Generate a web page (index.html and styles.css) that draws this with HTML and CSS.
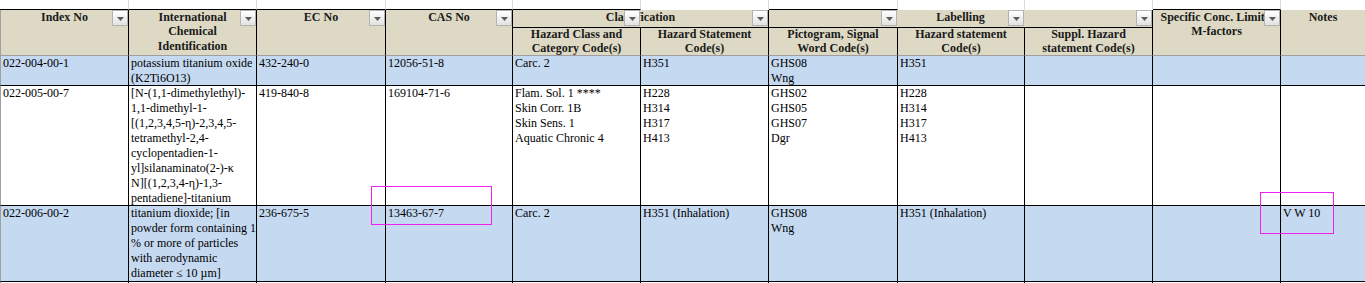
FILE: index.html
```html
<!DOCTYPE html>
<html lang="en">
<head>
<meta charset="utf-8">
<title>Annex VI – Titanium entries</title>
<link rel="stylesheet" href="styles.css">
</head>
<body>
<div class="sheet">
  <!-- spreadsheet strip above the header -->
  <div class="g k"></div><div class="g k"></div><div class="g k"></div><div class="g k"></div><div class="g k"></div>
  <div class="g"></div><div class="g k"></div><div class="g"></div><div class="g"></div><div class="g k"></div><div class="g last"></div>

  <!-- header -->
  <div class="h r2 first">Index No<span class="dd"></span></div>
  <div class="h r2">International<br>Chemical<br>Identification<span class="dd"></span></div>
  <div class="h r2">EC No<span class="dd"></span></div>
  <div class="h r2">CAS No<span class="dd"></span></div>
  <div class="h c2 grp">Classification<span class="dd at128"></span><span class="dd"></span></div>
  <div class="h c3 grp">Labelling<span class="dd at255"></span><span class="dd at128"></span><span class="dd"></span></div>
  <div class="h r2">Specific Conc. Limits,<br>M-factors<span class="dd"></span></div>
  <div class="h r2 last">Notes</div>
  <div class="h sub">Hazard Class and<br>Category Code(s)</div>
  <div class="h sub">Hazard Statement<br>Code(s)</div>
  <div class="h sub">Pictogram, Signal<br>Word Code(s)</div>
  <div class="h sub">Hazard statement<br>Code(s)</div>
  <div class="h sub">Suppl. Hazard<br>statement Code(s)</div>

  <!-- row 1 -->
  <div class="d blue first">022-004-00-1</div>
  <div class="d blue">potassium titanium oxide<br>(K2Ti6O13)</div>
  <div class="d blue">432-240-0</div>
  <div class="d blue">12056-51-8</div>
  <div class="d blue">Carc. 2</div>
  <div class="d blue">H351</div>
  <div class="d blue">GHS08<br>Wng</div>
  <div class="d blue">H351</div>
  <div class="d blue"></div>
  <div class="d blue"></div>
  <div class="d blue last"></div>

  <!-- row 2 -->
  <div class="d first">022-005-00-7</div>
  <div class="d">[N-(1,1-dimethylethyl)-<br>1,1-dimethyl-1-<br>[(1,2,3,4,5-η)-2,3,4,5-<br>tetramethyl-2,4-<br>cyclopentadien-1-<br>yl]silanaminato(2-)-κ<br>N][(1,2,3,4-η)-1,3-<br>pentadiene]-titanium</div>
  <div class="d">419-840-8</div>
  <div class="d">169104-71-6</div>
  <div class="d">Flam. Sol. 1 ****<br>Skin Corr. 1B<br>Skin Sens. 1<br>Aquatic Chronic 4</div>
  <div class="d">H228<br>H314<br>H317<br>H413</div>
  <div class="d">GHS02<br>GHS05<br>GHS07<br>Dgr</div>
  <div class="d">H228<br>H314<br>H317<br>H413</div>
  <div class="d"></div>
  <div class="d"></div>
  <div class="d last"></div>

  <!-- row 3 -->
  <div class="d blue first">022-006-00-2</div>
  <div class="d blue">titanium dioxide; [in<br>powder form containing 1<br>% or more of particles<br>with aerodynamic<br>diameter ≤ 10 µm]</div>
  <div class="d blue">236-675-5</div>
  <div class="d blue">13463-67-7</div>
  <div class="d blue">Carc. 2</div>
  <div class="d blue">H351 (Inhalation)</div>
  <div class="d blue">GHS08<br>Wng</div>
  <div class="d blue">H351 (Inhalation)</div>
  <div class="d blue"></div>
  <div class="d blue"></div>
  <div class="d blue last">V W 10</div>

  <!-- row 4 (partly visible) -->
  <div class="d first"></div><div class="d"></div><div class="d"></div><div class="d"></div><div class="d"></div><div class="d"></div>
  <div class="d"></div><div class="d"></div><div class="d"></div><div class="d"></div><div class="d last"></div>

  <!-- review marks -->
  <div class="mark mark-cas"></div>
  <div class="mark mark-notes"></div>
</div>
</body>
</html>
```
FILE: styles.css
```css
html, body {
  margin: 0;
  padding: 0;
  background: #fff;
  overflow: hidden;
}

body {
  font-family: "Liberation Serif", "Times New Roman", serif;
  font-size: 12px;
  color: #000;
}

.sheet {
  position: relative;
  display: grid;
  grid-template-columns: 129px 128px 129px 127px 128px 128px 129px 127px 128px 128px 1fr;
  grid-template-rows: 10px 18px 28px 30px 120px 76px 20px;
  width: 1365px;
}

.sheet > div {
  box-sizing: border-box;
  overflow: hidden;
}

/* empty spreadsheet strip */
.g {
  border-right: 1px solid #dadada;
  border-bottom: 1px solid #fff;
}
.g.k {
  border-bottom-color: #000;
}

/* header cells */
.h {
  position: relative;
  background: #ddd9c4;
  border-right: 1px solid #000;
  border-bottom: 1px solid #9f9f9f;
  padding: 0 2px;
  font-weight: bold;
  text-align: center;
  line-height: 14.3px;
  white-space: nowrap;
  color: #1a1a1a;
}
.h.grp {
  border-bottom-color: #000;
}
.h.sub {
  line-height: 13.5px;
}

.r2 { grid-row: span 2; }
.c2 { grid-column: span 2; }
.c3 { grid-column: span 3; }

.first {
  border-left: 1px solid #a0a0a0;
}

/* filter drop-down buttons */
.dd {
  position: absolute;
  top: 0;
  right: 0;
  width: 16px;
  height: 16px;
  box-sizing: border-box;
  border: 1px solid #b3b3b3;
  background: linear-gradient(#fefefe, #e2e2e2);
  z-index: 1;
}
.dd::after {
  content: "";
  position: absolute;
  left: 4px;
  top: 6px;
  width: 7px;
  height: 4px;
  background: #5c5c5c;
  clip-path: polygon(0 0, 100% 0, 50% 100%);
}
.dd.at128 { right: 128px; }
.dd.at255 { right: 255px; }

/* data cells */
.d {
  border-right: 1px solid #000;
  border-bottom: 1px solid #000;
  padding: 0 2px;
  line-height: 15px;
  white-space: nowrap;
  background: #fff;
}
.d.blue {
  background: #c5d9f1;
}

.last {
  border-right: none;
}

/* magenta review marks */
.sheet > .mark {
  position: absolute;
  border: 1px solid #f020f0;
  overflow: visible;
}
.mark-cas {
  left: 371px;
  top: 186px;
  width: 121px;
  height: 39px;
}
.mark-notes {
  left: 1260px;
  top: 192px;
  width: 74px;
  height: 42px;
}
```
